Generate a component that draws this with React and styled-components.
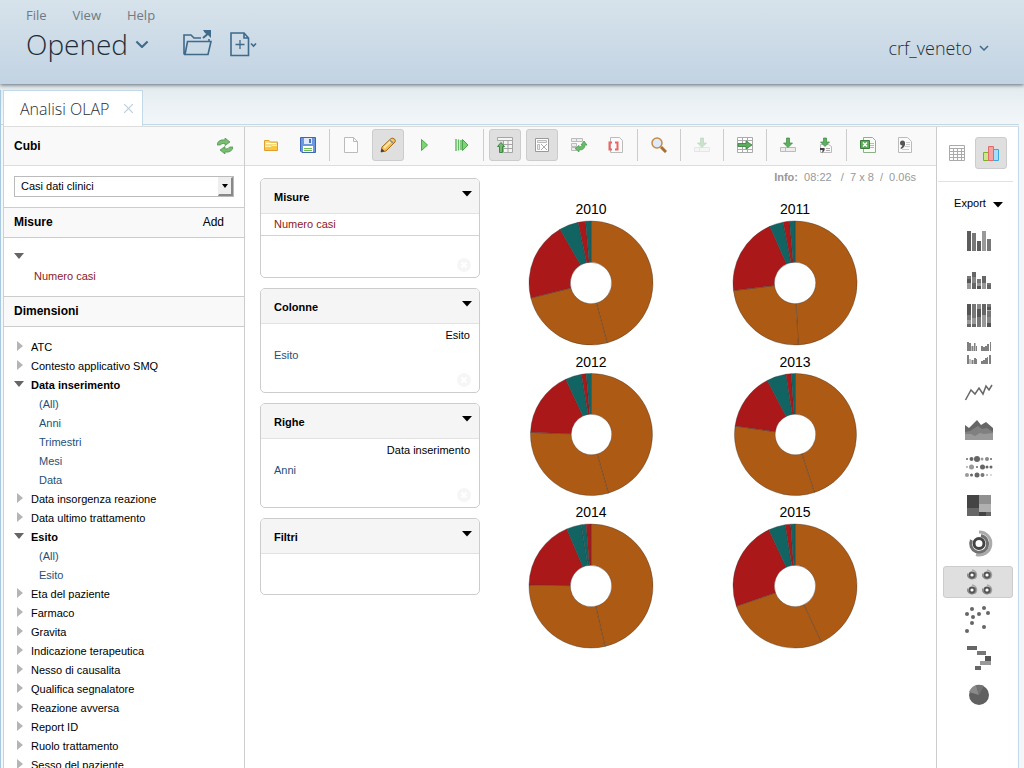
import React, { useState } from 'react';
import styled, { createGlobalStyle, css } from 'styled-components';

const GlobalStyle = createGlobalStyle`
  * { box-sizing: border-box; }
  body {
    margin: 0;
    background: #f3f7fa;
    color: #000;
    font: 11px/19px "Liberation Sans", Arial, sans-serif;
  }
  button {
    margin: 0;
    padding: 0;
    border: 0;
    background: none;
    color: inherit;
    font: inherit;
    cursor: pointer;
  }
  svg { display: block; }
  h2, h3, ul, p, figure { margin: 0; padding: 0; }
  ul { list-style: none; }
`;

/* ---------- data ---------- */

const BROWN = '#ad5a15';
const RED = '#ab1819';
const TEAL = '#126463';

// stops are the closing angle of each slice, in degrees
const usual = [BROWN, BROWN, RED, TEAL, RED, TEAL];
const charts = [
  { year: '2010', radius: 62, stops: [165, 256, 330, 348, 355, 360], colors: usual },
  { year: '2011', radius: 62, stops: [177, 263, 336, 349, 355, 360], colors: usual },
  { year: '2012', radius: 61, stops: [164, 272, 335, 350.5, 355, 360], colors: usual },
  { year: '2013', radius: 61, stops: [162, 278, 332.5, 351, 356, 360], colors: usual },
  { year: '2014', radius: 62, stops: [167, 271, 337, 351, 355.5, 360], colors: [BROWN, BROWN, RED, TEAL, TEAL, RED] },
  { year: '2015', radius: 62, stops: [155, 251, 335, 351, 356, 360], colors: usual },
];

const dimensions = [
  { name: 'ATC' },
  { name: 'Contesto applicativo SMQ' },
  { name: 'Data inserimento', levels: ['(All)', 'Anni', 'Trimestri', 'Mesi', 'Data'] },
  { name: 'Data insorgenza reazione' },
  { name: 'Data ultimo trattamento' },
  { name: 'Esito', levels: ['(All)', 'Esito'] },
  { name: 'Eta del paziente' },
  { name: 'Farmaco' },
  { name: 'Gravita' },
  { name: 'Indicazione terapeutica' },
  { name: 'Nesso di causalita' },
  { name: 'Qualifica segnalatore' },
  { name: 'Reazione avversa' },
  { name: 'Report ID' },
  { name: 'Ruolo trattamento' },
  { name: 'Sesso del paziente' },
];

/* ---------- header ---------- */

const Page = styled.div`
  display: flex;
  flex-direction: column;
  height: 100vh;
  overflow: hidden;
  background: linear-gradient(#e3ebef 84px, #f3f7fa 126px);
`;

const Header = styled.header`
  flex: none;
  display: flex;
  justify-content: space-between;
  height: 84px;
  padding: 4px 35px 0 26px;
  background: linear-gradient(#d7e3eb, #c2d3e3);
  box-shadow: 0 1px 4px rgba(40, 50, 60, 0.7);
  color: #1f2d38;
  font-family: "Open Sans", sans-serif;
  z-index: 1;
`;

const MenuBar = styled.nav`
  display: flex;
  gap: 26px;
  color: #6f7a82;
  font-size: 13px;
  line-height: 22px;
`;

const TitleRow = styled.div`
  display: flex;
  align-items: center;
  height: 36px;
`;

const TitleButton = styled.button`
  display: flex;
  align-items: center;
  gap: 7px;
  margin-right: 34px;
  font-size: 28px;
  font-weight: 300;
  line-height: 36px;
`;

const HeaderTool = styled.button`
  margin-right: 18px;
`;

const UserButton = styled.button`
  display: flex;
  align-items: center;
  gap: 7px;
  align-self: flex-start;
  height: 88px;
  font-size: 18px;
  font-weight: 300;
`;

const Chevron = ({ width, weight }) => (
  <svg width={width} height={width * 0.6} viewBox="0 0 10 6" fill="none" stroke="#3f6a8a" strokeWidth={weight}>
    <path d="M1 1l4 4 4-4" />
  </svg>
);

const OpenFolderIcon = () => (
  <svg width="29" height="28" viewBox="0 0 29 28" fill="none" stroke="#3f6a8a" strokeWidth="1.6">
    <path d="M1 24.500V5h7l3 3h7M1 24.500h24l3-13H4.500L2 24.500M26 11V9" />
    <path d="M20 8l7-6" strokeWidth="2" />
    <path d="M20 0h8v8l-3-3-3-2z" fill="#3f6a8a" stroke="none" />
  </svg>
);

const NewFileIcon = () => (
  <svg width="27" height="25" viewBox="0 0 27 25" fill="none" stroke="#3f6a8a" strokeWidth="1.6">
    <path d="M1 1h13l4.500 5v17.500H1zM14 1v5h4.500" />
    <path d="M10 8v9M5.500 12.500h9" strokeWidth="1.300" />
    <path d="M21 11.500l2.500 2.500 2.500-2.500" />
  </svg>
);

/* ---------- tabs ---------- */

const Body = styled.div`
  flex: 1;
  min-height: 0;
  display: flex;
  flex-direction: column;
  margin-top: 6px;
  padding-right: 5px;
  border-left: 1px solid #a9c9e0;
`;

const TabStrip = styled.div`
  flex: none;
  height: 35px;
  border-bottom: 1px solid #c3d9e8;
  padding-left: 2px;
`;

const Tab = styled.div`
  display: flex;
  align-items: center;
  gap: 15px;
  width: 140px;
  height: 36px;
  padding-left: 16px;
  border: 1px solid #c3d9e8;
  border-bottom: 0;
  background: #fff;
  color: #1f2d38;
  font: 300 16px/36px "Open Sans", sans-serif;
`;

/* ---------- workspace ---------- */

const Workspace = styled.main`
  flex: 1;
  min-height: 0;
  display: grid;
  grid-template-columns: 241px minmax(0, 1fr) 82px;
  margin-top: 1px;
  margin-left: 2px;
  border-left: 1px solid #c5d3dc;
  border-right: 1px solid #c3d9e8;
  border-top: 1px solid #ddd;
  background: #fff;
`;

const Sidebar = styled.aside`
  overflow: hidden;
  border-right: 1px solid #ccc;
`;

const SideHeading = styled.div`
  display: flex;
  align-items: center;
  justify-content: space-between;
  height: ${p => (p.$tall ? 39 : 31)}px;
  padding: 0 ${p => (p.$tall ? 11 : 20)}px 0 10px;
  border-top: ${p => (p.$tall ? 0 : 1)}px solid #ccc;
  border-bottom: 1px solid ${p => (p.$tall ? '#ddd' : '#ccc')};
  background: #f9f9f9;
  font-size: 12px;

  h2 { font-size: 12px; }
`;

const CubeSelect = styled.label`
  display: block;
  position: relative;
  margin: 10px;

  select {
    display: block;
    width: 100%;
    height: 21px;
    padding: 0 6px;
    appearance: none;
    border: 1px solid #bbb;
    border-radius: 0;
    background: #fff;
    color: #000;
    font: inherit;
  }
`;

// drawn over the right end of the native select
const SelectArrow = styled.span`
  position: absolute;
  top: 1px;
  right: 1px;
  display: grid;
  place-items: center;
  width: 15px;
  height: 19px;
  border: 1px solid #eee;
  border-right: 2px solid #888;
  border-bottom: 2px solid #888;
  background: #eee;
  pointer-events: none;
`;

const Tree = styled.ul`
  padding: ${p => (p.$compact ? '10px 0' : '11px 0 0')};
`;

const TreeButton = styled.button`
  display: flex;
  align-items: center;
  width: 100%;
  height: 19px;
  padding-left: 10px;
  font-weight: ${p => (p.$open ? 'bold' : 'normal')};
  text-align: left;

  svg { flex: none; margin: 0 7px 3px 0; }
`;

const Level = styled.a`
  display: block;
  padding-left: ${p => (p.$measure ? 30 : 35)}px;
  color: ${p => (p.$measure ? '#8b1a1e' : '#1f4f78')};
  text-decoration: none;
`;

const Triangle = ({ open }) => (
  <svg width="10" height="10" viewBox="0 0 10 10">
    {open ? <path d="M0 2h10L5 8z" fill="#666" /> : <path d="M3 0l6 5-6 5z" fill="#b5b5b5" />}
  </svg>
);

const Caret = () => (
  <svg width="10" height="6" viewBox="0 0 10 6"><path d="M0 0h10L5 5.500z" fill="#000" /></svg>
);

/* ---------- toolbar ---------- */

const Center = styled.section`
  display: flex;
  flex-direction: column;
  min-width: 0;
`;

const Toolbar = styled.div`
  flex: none;
  display: flex;
  gap: 5px;
  height: 39px;
  padding: 2px 10px 0;
  border-bottom: 1px solid #ddd;
  background: #f9f9f9;
`;

const ToolButton = styled.button`
  display: grid;
  place-items: center;
  flex: none;
  width: 32px;
  height: 32px;
  border-radius: 3px;
  ${p => p.$active && css`
    border: 1px solid #ccc;
    background: #dfdfdf;
  `}

  &:disabled { opacity: 0.3; }
`;

const Separator = styled.span`
  flex: none;
  width: 1px;
  height: 32px;
  background: #ccc;
`;

const GREEN = '#4aa84e';

const glyphs = {
  open: (
    <>
      <path d="M1.500 13.500V3.500H6L7.500 5H14.500V13.500z" fill="#f6dc7c" stroke="#e0a030" />
      <path d="M3 6.500h10" fill="none" stroke="#fff" />
      <path d="M2 9h6l1-1h5v5H2z" fill="#f9c840" />
      <path d="M2 9.500h6l1-1h5" fill="none" stroke="#fff1b0" />
    </>
  ),
  save: (
    <>
      <path d="M.5.5h15v15H2L.5 14z" fill="#6b97df" stroke="#3d66b5" />
      <path d="M4 1h8v6H4z" fill="#dfe9fa" />
      <path d="M9 2h2v4H9z" fill="#4a72bd" />
      <path d="M3 9h10v6H3z" fill="#fff" />
      <path d="M4 11.500h8M4 13.500h8" stroke="#6fbf4e" />
    </>
  ),
  blank: (
    <path d="M1.500.5h9l4 4v11h-13zM10.500.5v4h4" fill="#fdfdfd" stroke="#bbb" />
  ),
  pencil: (
    <>
      <path d="M1 15l1-5L11 1.500Q13 .5 14.500 2t.5 3L6 14z" fill="#f7bd55" stroke="#a36d1d" />
      <path d="M4 11l8-8" stroke="#ffe6a0" strokeWidth="2" />
      <path d="M10 3l3 3" stroke="#888" strokeWidth="1.500" />
      <path d="M1 15l.700-3.500 2.800 2.800z" fill="#333" />
    </>
  ),
  play: <path d="M4.500 2.500l6 5.500-6 5.500z" fill="#7bd672" stroke={GREEN} />,
  playAll: (
    <>
      <path d="M2 2v12M4.500 2.500v11M7 3v10" stroke="#62bb62" strokeWidth="1.500" />
      <path d="M8.500 2.500L14 8l-5.500 5.500z" fill="#7bd672" stroke={GREEN} />
    </>
  ),
  parents: (
    <>
      <path d="M.5.5h15v3H.5zM6.500 3.500h9v12h-9zM11 3.500v12M6.500 7.500h9M6.500 11.500h9" fill="#f4f4f4" stroke="#a5a5a5" />
      <path d="M4 5.500l3.500 4h-2v6h-3v-6h-2z" fill="#72b972" stroke="#3d8a40" />
    </>
  ),
  hideEmpty: (
    <>
      <path d="M1.500 1.500h13v13h-13z" fill="#fff" stroke="#999" />
      <path d="M3.500 3.500h9v2h-9zM3.500 7.500h2v5h-2z" fill="#eee" stroke="#bbb" />
      <path d="M7 7l6 6M13 7l-6 6" stroke="#aaa" />
    </>
  ),
  swap: (
    <>
      <path d="M.5 1.500h5v3h-5zM5.500 1.500h6v3h-6zM.5 6.500h5v3h-5zM.5 10.500h5v3h-5z" fill="#eee" stroke="#bbb" />
      <path d="M13 4l3 4h-2q0 5-6 5v2l-4-3.500L8 8.500V10q3 0 3.500-2H10z" fill="#69bd6a" stroke="#43994a" strokeWidth=".7" />
    </>
  ),
  mdx: (
    <>
      <path d="M2.500.5h9l3 3v12h-12z" fill="#fafafa" stroke="#bbb" />
      <path d="M4 5.500H1.500v7H4M7 5.500h2.500v7H7" fill="none" stroke="#ef6461" strokeWidth="2" />
    </>
  ),
  zoom: (
    <>
      <path d="M10 10l5 5" stroke="#a86f34" strokeWidth="3" />
      <circle cx="6" cy="6" r="5" fill="#deebf8" stroke="#c88a48" strokeWidth="1.500" />
    </>
  ),
  exportDown: (
    <>
      <path d="M.5 10.500h15v4H.5zM5.500 10.500v4" fill="#eee" stroke="#bbb" />
      <path d="M6.500 1h3v5h3L8 10.500 3.500 6h3z" fill="#5cb05e" stroke="#3d8a40" strokeWidth=".7" />
    </>
  ),
  drillAcross: (
    <>
      <path d="M.5.5h15v15H.5zM.5 3.500h15M.5 12.500h15M5.500.5v15M10.500.5v15" fill="#fff" stroke="#aaa" />
      <path d="M1 6.500h8V4l6 4-6 4V9.500H1z" fill="#5cae5e" stroke="#347d37" strokeWidth=".8" />
    </>
  ),
  exportComma: (
    <>
      <path d="M3.500 7.500h8l3 2v6h-11z" fill="#fafafa" stroke="#bbb" />
      <path d="M9 11.500h4M9 13.500h4" stroke="#aaa" />
      <path d="M6.500 1h3v4h3L8 9.500 3.500 5h3z" fill="#5cb05e" stroke="#3d8a40" strokeWidth=".7" />
      <path d="M3 11h4.500q1 3-3 5 1.500-2 1-3H3z" fill="#444" />
    </>
  ),
  excel: (
    <>
      <path d="M3.500.5h9l3 3v12h-12z" fill="#f8fbf6" stroke="#8db088" />
      <path d="M10 6.500h4M10 8.500h4M10 10.500h4" stroke="#a8c8a0" />
      <path d="M.5 3.500h9v8h-9z" fill="#5fa95d" stroke="#3c7f3b" />
      <path d="M3 5.500l4 4M7 5.500l-4 4" stroke="#fff" strokeWidth="1.500" />
    </>
  ),
  csv: (
    <>
      <path d="M1.500.5h9l4 4v11h-13z" fill="#fafafa" stroke="#bbb" />
      <path d="M9 5.500h4M9 7.500h4M8 9.500h5M5 12.500h7" stroke="#ccc" />
      <circle cx="5.500" cy="6" r="2.500" fill="#555" />
      <path d="M8 6q.5 4-4 6l-.5-1q2.500-1.500 2-4z" fill="#555" />
    </>
  ),
  table: (
    <path d="M.5.500h15v15H.5zM.5 3.500h15M.5 6.500h15M.5 9.500h15M.5 12.500h15M4.500 3.500v12M8.500 3.500v12M12.500 3.500v12" fill="#fdfdfd" stroke="#aaa" />
  ),
  bars: (
    <>
      <path d="M.5 7.500h5v8h-5z" fill="#cbe68b" stroke="#79b324" />
      <path d="M5.500 1.500h5v14h-5z" fill="#f5a3a3" stroke="#e56b6b" />
      <path d="M10.500 4.500h5v11h-5z" fill="#a9def8" stroke="#3ea6dc" />
    </>
  ),
  refresh: (
    <>
      <path d="M0 7q1-6 8-5V0l5 4-5 3.500V5.500Q4 5 3.500 7z" fill="#78bd72" stroke="#478f45" strokeWidth=".7" />
      <path d="M16 9q-1 6-8 5v2l-5-4 5-3.500V11q4 0 4.500-2z" fill="#78bd72" stroke="#478f45" strokeWidth=".7" />
    </>
  ),
};

const Glyph = ({ name }) => (
  <svg width="16" height="16" viewBox="0 0 16 16" fill="none">{glyphs[name]}</svg>
);

const tools = [
  [['open', 'Apri'], ['save', 'Salva']],
  [['blank', 'Nuova'], ['pencil', 'Modifica', 'active'], ['play', 'Esecuzione automatica'], ['playAll', 'Esegui']],
  [['parents', 'Mostra padri', 'active'], ['hideEmpty', 'Nascondi vuoti', 'active'], ['swap', 'Scambia assi'], ['mdx', 'Mostra MDX']],
  [['zoom', 'Zoom']],
  [['exportDown', 'Drill', 'disabled']],
  [['drillAcross', 'Drill across']],
  [['exportDown', 'Drill through'], ['exportComma', 'Esporta drill through']],
  [['excel', 'Esporta XLS'], ['csv', 'Esporta CSV']],
];

/* ---------- query panels ---------- */

const Canvas = styled.div`
  display: grid;
  grid-template-columns: 220px minmax(0, 1fr);
  padding: 0 15px;
`;

const Zones = styled.div`
  display: flex;
  flex-direction: column;
  gap: 10px;
  padding-top: 12px;
`;

const Zone = styled.section`
  height: ${p => p.$height}px;
  display: flex;
  flex-direction: column;
  border: 1px solid #ccc;
  border-radius: 5px;
  background: #fff;
`;

const ZoneHeading = styled.div`
  flex: none;
  display: flex;
  justify-content: space-between;
  height: 35px;
  padding: 0 7px 0 13px;
  border-bottom: 1px solid #e2e2e2;
  border-radius: 4px 4px 0 0;
  background: #f5f5f5;
  line-height: 36px;

  h3 { font-size: 11px; }
  button { height: 29px; }
`;

const ZoneHierarchy = styled.p`
  padding: 1px 9px 0;
  line-height: 20px;
  text-align: right;
`;

const ZoneMember = styled.a`
  display: block;
  padding: 0 13px;
  color: ${p => (p.$measure ? '#8b1a1e' : '#1f4f78')};
  border-bottom: 1px solid ${p => (p.$measure ? '#ecc8c8' : 'transparent')};
  line-height: 21px;
  text-decoration: none;
`;

const ClearButton = styled.button`
  margin: auto 8px 5px auto;
`;

const ClearIcon = () => (
  <svg width="14" height="14" viewBox="0 0 14 14" stroke="#fff" strokeWidth="2">
    <circle cx="7" cy="7" r="7" fill="#f6f6f6" stroke="none" />
    <path d="M4.500 4.500l5 5M9.500 4.500l-5 5" />
  </svg>
);

const QueryZone = ({ title, height, hierarchy, member, measure }) => (
  <Zone $height={height}>
    <ZoneHeading>
      <h3>{title}</h3>
      <button aria-label={`Menu ${title}`}><Caret /></button>
    </ZoneHeading>
    {hierarchy && <ZoneHierarchy>{hierarchy}</ZoneHierarchy>}
    {member && <ZoneMember href="#" $measure={measure}>{member}</ZoneMember>}
    {member && <ClearButton aria-label={`Svuota ${title}`}><ClearIcon /></ClearButton>}
  </Zone>
);

/* ---------- charts ---------- */

const Results = styled.div`
  min-width: 0;
`;

const Info = styled.p`
  display: flex;
  justify-content: flex-end;
  padding: 1px 5px 0 0;
  color: #999;
  line-height: 20px;
  white-space: pre;
`;

const ChartGrid = styled.div`
  display: grid;
  grid-template-columns: repeat(2, 204px);
  row-gap: 5px;
  padding: 11px 0 0 9px;
`;

const Chart = styled.figure`
  display: flex;
  flex-direction: column;
  align-items: center;

  figcaption {
    font-size: 14px;
    line-height: 22px;
  }
`;

const slicePath = (from, to, r, hole) => {
  const point = (deg, radius) => {
    const a = (deg - 90) * Math.PI / 180;
    return `${(radius * Math.cos(a)).toFixed(2)} ${(radius * Math.sin(a)).toFixed(2)}`;
  };
  const large = to - from > 180 ? 1 : 0;
  return `M${point(from, r)}A${r} ${r} 0 ${large} 1 ${point(to, r)}L${point(to, hole)}A${hole} ${hole} 0 ${large} 0 ${point(from, hole)}z`;
};

const Donut = ({ year, radius, stops, colors }) => {
  const size = radius === 62 ? 126 : 123;
  return (
    <Chart>
      <figcaption>{year}</figcaption>
      <svg width={size} height={size} viewBox={`${-size / 2} ${-size / 2} ${size} ${size}`}>
        {stops.map((stop, i) => (
          <path
            key={stop}
            d={slicePath(i ? stops[i - 1] : 0, stop, radius, radius / 3)}
            fill={colors[i]}
            stroke="#333"
            strokeOpacity=".35"
            strokeWidth="1"
          />
        ))}
      </svg>
    </Chart>
  );
};

/* ---------- right strip ---------- */

const Strip = styled.aside`
  display: flex;
  flex-direction: column;
  align-items: center;
  border-left: 1px solid #ccc;
`;

const ViewSwitch = styled.div`
  display: flex;
  gap: 2px;
  align-self: stretch;
  justify-content: center;
  margin: 0 5px 0 1px;
  padding: 10px 4px 12px 0;
  border-bottom: 1px solid #e2e2e2;
`;

const ExportButton = styled.button`
  display: flex;
  align-items: center;
  gap: 7px;
  height: 42px;
  padding-left: 2px;

  svg { margin-top: 4px; }
`;

const ChartTypes = styled.div`
  display: grid;
  gap: 6px;
`;

const ChartType = styled.button`
  display: grid;
  place-items: center;
  width: 70px;
  height: 32px;
  padding-left: 2px;
  border: 1px solid ${p => (p.$active ? '#ccc' : 'transparent')};
  border-radius: 3px;
  background: ${p => (p.$active ? '#dfdfdf' : 'none')};
`;

const rects = (list, fill) => list.map(([x, y, w, h, own], i) => (
  <rect key={i} x={x} y={y} width={w} height={h} fill={own || fill} />
));

const MiniSunburst = ({ x, y }) => (
  <g transform={`translate(${x} ${y})`} fill="none">
    <path d="M0-5A5 5 0 0 1 3 3.500" stroke="#aaa" strokeWidth="1.500" />
    <path d="M-4-1.500A4 4 0 1 0 3-2.500" stroke="#888" strokeWidth="1.500" />
    <circle r="2.500" fill="#fff" stroke="#555" strokeWidth="1.800" />
  </g>
);

// every drawing lives on a 30 x 30 board
const chartTypes = [
  ['Barre', rects([[3, 6, 4, 20, '#5c5c5c'], [8, 8, 4, 18, '#777'], [13, 16, 4, 10, '#5c5c5c'], [18, 6, 4, 20, '#999'], [23, 14, 4, 12, '#777']])],
  ['Barre in pila', rects([
    [3, 13, 4, 3, '#777'], [3, 16, 4, 4, '#555'], [3, 20, 4, 6, '#999'],
    [8, 9, 4, 5, '#666'], [8, 14, 4, 6, '#888'], [8, 20, 4, 6, '#666'],
    [13, 16, 4, 4, '#777'], [13, 20, 4, 3, '#999'], [13, 23, 4, 3, '#555'],
    [18, 13, 4, 7, '#666'], [18, 20, 4, 6, '#999'],
    [23, 20, 4, 2, '#777'], [23, 22, 4, 4, '#666'],
  ])],
  ['Barre 100%', rects([
    [3, 3, 4, 11, '#555'], [3, 14, 4, 5, '#777'], [3, 19, 4, 4, '#999'], [3, 23, 4, 3, '#666'],
    [8, 3, 4, 14, '#777'], [8, 17, 4, 6, '#999'], [8, 23, 4, 3, '#666'],
    [13, 3, 4, 5, '#888'], [13, 8, 4, 8, '#555'], [13, 16, 4, 10, '#777'],
    [18, 3, 4, 11, '#666'], [18, 14, 4, 12, '#999'],
    [23, 3, 4, 3, '#777'], [23, 6, 4, 3, '#555'], [23, 9, 4, 1, '#aaa'], [23, 10, 4, 6, '#777'], [23, 16, 4, 6, '#888'], [23, 22, 4, 4, '#555'],
  ])],
  ['Barre multiple', rects([
    [3, 3, 2, 9], [5, 4, 2, 8], [7.500, 7, 2, 5], [10, 4, 1.500, 8], [12, 7, 1, 5],
    [17, 7, 2, 5], [19, 8, 2, 4], [21, 7, 2, 5], [23, 5, 2, 7], [26, 3, 1, 9],
    [3, 16, 2, 9], [5.500, 20, 1, 5], [7.500, 21, 2, 4], [10, 19, 2, 6], [12, 20, 1, 5],
    [17, 22, 2, 3], [19, 21, 2, 4], [21, 19, 2, 6], [23, 18, 1, 7], [25, 16, 2, 9],
  ], '#808080')],
  ['Linee', <path d="M1.500 23l5.500-10 4 4 4-6 4 6 3-8 3 4 3-5" fill="none" stroke="#666" strokeWidth="1.500" />],
  ['Aree', (
    <>
      <path d="M1 10l4 3 8-8 4 5 5-3 7 6v12H1z" fill="#666" />
      <path d="M1 17l5-1 8-5 4 3 5-1 6 4v8H1z" fill="#808080" />
      <path d="M1 19h6l4 2 5-3 4 1 9-1v7H1z" fill="#999" />
    </>
  )],
  ['Punti', (
    <g fill="#666">
      <circle cx="3" cy="6" r="1" /><circle cx="7.500" cy="6" r="2" /><circle cx="13" cy="6" r="3" /><circle cx="18" cy="6" r="1.500" fill="#999" /><circle cx="23" cy="6" r="2" fill="#888" /><circle cx="27" cy="6" r="1" />
      <circle cx="3" cy="14" r="1" fill="#aaa" /><circle cx="7.500" cy="14" r="2.500" fill="#999" /><circle cx="13" cy="14" r="1" /><circle cx="18.500" cy="14" r="2.500" /><circle cx="23" cy="14" r="1.500" /><circle cx="27" cy="14" r="1.500" />
      <circle cx="3" cy="22" r="2" fill="#999" /><circle cx="7.500" cy="22" r="1.500" /><circle cx="13" cy="22" r="2.500" /><circle cx="18.500" cy="22" r="2" fill="#777" /><circle cx="23" cy="22" r="1" fill="#aaa" /><circle cx="27" cy="22" r=".8" fill="#aaa" />
    </g>
  )],
  ['Mappa ad albero', rects([[3, 4, 12, 13, '#444'], [3, 17, 12, 8, '#666'], [15, 4, 12, 9, '#909090'], [15, 13, 12, 8, '#b0b0b0'], [15, 21, 7, 4, '#444'], [22, 21, 5, 4, '#666']])],
  ['Sunburst', (
    <g fill="none" strokeWidth="3">
      <path d="M15 3A11.500 11.500 0 1 1 12 25.500" stroke="#aaa" />
      <path d="M7.500 11A8.500 8.500 0 1 0 17 6.500" stroke="#707070" />
      <circle cx="15" cy="14.500" r="5" stroke="#444" />
    </g>
  )],
  ['Sunburst multiplo', (
    <>
      <MiniSunburst x="8" y="8" /><MiniSunburst x="23" y="8" />
      <MiniSunburst x="8" y="23" /><MiniSunburst x="23" y="23" />
    </>
  )],
  ['Dispersione', (
    <g fill="#666">
      {[[8, 4], [20, 3], [3, 9], [15, 9], [24, 8], [9, 12], [8, 18], [20, 22], [3, 26]].map(([cx, cy]) => (
        <circle key={`${cx}-${cy}`} cx={cx} cy={cy} r="2" />
      ))}
    </g>
  )],
  ['Cascata', rects([[3, 3, 10, 4, '#666'], [13, 8, 9, 4, '#777'], [21, 13, 6, 5, '#555'], [16, 18, 11, 4, '#999'], [11, 23, 6, 4, '#666']])],
  ['Torta', (
    <>
      <circle cx="15" cy="14" r="10" fill="#606060" />
      <path d="M15 14L5 11q2-5 7-7z" fill="#8a8a8a" />
      <path d="M15 14l-3-10q4-1 8 1z" fill="#727272" />
    </>
  )],
];

export default function App() {
  const [chartType, setChartType] = useState('Sunburst multiplo');

  return (
    <Page>
      <GlobalStyle />
      <Header>
        <div>
          <MenuBar>
            <button>File</button>
            <button>View</button>
            <button>Help</button>
          </MenuBar>
          <TitleRow>
            <TitleButton>Opened <Chevron width={14} weight={1.500} /></TitleButton>
            <HeaderTool aria-label="Open"><OpenFolderIcon /></HeaderTool>
            <HeaderTool aria-label="New"><NewFileIcon /></HeaderTool>
          </TitleRow>
        </div>
        <UserButton>crf_veneto <Chevron width={10} weight={1.500} /></UserButton>
      </Header>

      <Body>
        <TabStrip>
          <Tab>
            Analisi OLAP
            <button aria-label="Chiudi">
              <svg width="9" height="9" viewBox="0 0 9 9" stroke="#bccfdd" strokeWidth="1.200"><path d="M0 0l9 9M9 0L0 9" /></svg>
            </button>
          </Tab>
        </TabStrip>

        <Workspace>
          <Sidebar>
            <SideHeading $tall>
              <h2>Cubi</h2>
              <button aria-label="Aggiorna"><Glyph name="refresh" /></button>
            </SideHeading>
            <CubeSelect>
              <select aria-label="Cubo">
                <option>Casi dati clinici</option>
              </select>
              <SelectArrow>
                <svg width="6" height="4" viewBox="0 0 6 4"><path d="M0 0h6L3 4z" /></svg>
              </SelectArrow>
            </CubeSelect>
            <SideHeading>
              <h2>Misure</h2>
              <button>Add</button>
            </SideHeading>
            <Tree $compact>
              <li>
                <TreeButton $open aria-label="Misure"><Triangle open /></TreeButton>
                <Level href="#" $measure>Numero casi</Level>
              </li>
            </Tree>
            <SideHeading>
              <h2>Dimensioni</h2>
            </SideHeading>
            <Tree>
              {dimensions.map(({ name, levels }) => (
                <li key={name}>
                  <TreeButton $open={!!levels}><Triangle open={!!levels} />{name}</TreeButton>
                  {levels && levels.map(level => <Level key={level} href="#">{level}</Level>)}
                </li>
              ))}
            </Tree>
          </Sidebar>

          <Center>
            <Toolbar>
              {tools.map((group, i) => (
                <React.Fragment key={i}>
                  {i > 0 && <Separator />}
                  {group.map(([name, label, mode]) => (
                    <ToolButton key={name} aria-label={label} $active={mode === 'active'} disabled={mode === 'disabled'}>
                      <Glyph name={name} />
                    </ToolButton>
                  ))}
                </React.Fragment>
              ))}
            </Toolbar>
            <Canvas>
              <Zones>
                <QueryZone title="Misure" height={100} member="Numero casi" measure />
                <QueryZone title="Colonne" height={105} hierarchy="Esito" member="Esito" />
                <QueryZone title="Righe" height={105} hierarchy="Data inserimento" member="Anni" />
                <QueryZone title="Filtri" height={77} />
              </Zones>
              <Results>
                <Info><b>Info:</b>{'  08:22   /  7 x 8  /  0.06s'}</Info>
                <ChartGrid>
                  {charts.map(chart => <Donut key={chart.year} {...chart} />)}
                </ChartGrid>
              </Results>
            </Canvas>
          </Center>

          <Strip>
            <ViewSwitch>
              <ToolButton aria-label="Tabella"><Glyph name="table" /></ToolButton>
              <ToolButton aria-label="Grafico" $active><Glyph name="bars" /></ToolButton>
            </ViewSwitch>
            <ExportButton>Export <Caret /></ExportButton>
            <ChartTypes>
              {chartTypes.map(([name, drawing]) => (
                <ChartType key={name} aria-label={name} $active={name === chartType} onClick={() => setChartType(name)}>
                  <svg width="30" height="30" viewBox="0 0 30 30">{drawing}</svg>
                </ChartType>
              ))}
            </ChartTypes>
          </Strip>
        </Workspace>
      </Body>
    </Page>
  );
}
